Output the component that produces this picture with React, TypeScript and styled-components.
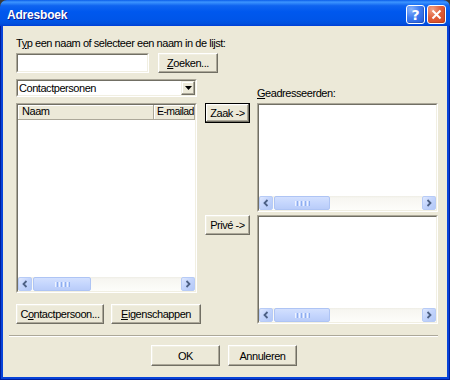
import React from 'react';
import styled, { createGlobalStyle } from 'styled-components';

const GlobalStyle = createGlobalStyle`
  html, body {
    margin: 0;
    padding: 0;
    background: #3a3a3a;
  }
  body {
    font-family: "Liberation Sans", Arial, sans-serif;
  }
`;

// Window chrome
const Window = styled.div`
  width: 450px;
  height: 380px;
  display: flex;
  flex-direction: column;
  border-radius: 7px 7px 0 0;
  overflow: hidden;
`;

const TitleBar = styled.div`
  height: 26px;
  box-sizing: border-box;
  padding: 3px 4px 0 7px;
  display: flex;
  align-items: center;
  justify-content: space-between;
  background: linear-gradient(
    to bottom,
    #0a5de9 0%,
    #3d95ff 8%,
    #0f64f0 22%,
    #0058ee 45%,
    #0055e8 78%,
    #0150dd 92%,
    #003dd7 100%
  );
`;

const Title = styled.span`
  color: #fff;
  font-weight: bold;
  font-size: 12px;
  letter-spacing: -0.2px;
  text-shadow: 1px 1px #0f1a8a;
  font-family: "Liberation Sans", Arial, sans-serif;
`;

const TitleButtons = styled.div`
  display: flex;
  gap: 2px;
`;

const CaptionButton = styled.div<{ $kind: 'help' | 'close' }>`
  width: 19px;
  height: 19px;
  box-sizing: border-box;
  border: 1px solid #fff;
  border-radius: 3px;
  display: flex;
  align-items: center;
  justify-content: center;
  color: #fff;
  font-weight: bold;
  font-size: 14px;
  font-family: "DejaVu Sans", sans-serif;
  background: ${p =>
    p.$kind === 'close'
      ? 'radial-gradient(circle at 25% 20%, #f1a184 0%, #e0603b 45%, #d6441d 100%)'
      : 'radial-gradient(circle at 25% 20%, #8ab4fb 0%, #3f7cf0 45%, #2359d8 100%)'};
  box-shadow: inset -1px -1px rgba(0, 0, 0, 0.15);
`;

const Frame = styled.div`
  flex: 1;
  display: flex;
  background: #0843d9;
  padding: 0 4px 3px 3px;
  box-shadow: inset 1px 0 #001e9c, inset -1px 0 #001e9c, inset 0 -1px #001e9c;
`;

const Client = styled.div`
  flex: 1;
  display: flex;
  flex-direction: column;
  background: #ece9d8;
  padding: 11px 9px 11px 13px;
  font-size: 11px;
  letter-spacing: -0.45px;
  color: #000;
`;

// Controls
const Label = styled.div`
  height: 13px;
  line-height: 13px;
  white-space: nowrap;
`;

const Mnemonic = styled.u`
  text-decoration: underline;
`;

const Button = styled.div<{ $w: number; $h?: number; $default?: boolean }>`
  width: ${p => p.$w}px;
  height: ${p => p.$h ?? 20}px;
  box-sizing: border-box;
  display: flex;
  align-items: center;
  justify-content: center;
  white-space: nowrap;
  background: #ece9d8;
  border: 1px solid;
  border-color: ${p => (p.$default ? '#000' : '#fff #716f64 #716f64 #fff')};
  box-shadow: ${p =>
    p.$default
      ? 'inset -1px -1px #716f64, inset 1px 1px #fff, inset -2px -2px #aca899, inset 2px 2px #f1efe2'
      : 'inset -1px -1px #aca899, inset 1px 1px #f1efe2'};
`;

const Sunken = styled.div<{ $w: number; $h: number }>`
  width: ${p => p.$w}px;
  height: ${p => p.$h}px;
  box-sizing: border-box;
  border: 1px solid;
  border-color: #aca899 #fff #fff #aca899;
  display: flex;
`;

const SunkenInner = styled.div`
  flex: 1;
  min-width: 0;
  display: flex;
  flex-direction: column;
  background: #fff;
  border: 1px solid;
  border-color: #716f64 #f1efe2 #f1efe2 #716f64;
  overflow: hidden;
`;

const SearchRow = styled.div`
  display: flex;
  gap: 9px;
  margin-top: 3px;
`;

const Main = styled.div`
  display: flex;
  gap: 4px;
  margin-top: 6px;
`;

const LeftCol = styled.div`
  width: 185px;
  display: flex;
  flex-direction: column;
`;

const ComboRow = styled.div`
  flex: 1;
  display: flex;
  align-items: center;
  padding-left: 1px;
`;

const ComboText = styled.span`
  flex: 1;
  line-height: 14px;
`;

const ComboArrow = styled.div`
  width: 14px;
  height: 14px;
  box-sizing: border-box;
  display: flex;
  align-items: center;
  justify-content: center;
  background: #ece9d8;
  border: 1px solid;
  border-color: #f1efe2 #716f64 #716f64 #f1efe2;
  box-shadow: inset -1px -1px #aca899, inset 1px 1px #fff;
`;

const ListSpacer = styled.div`
  margin-top: 6px;
`;

const HeaderRow = styled.div`
  height: 15px;
  display: flex;
  flex-shrink: 0;
  background: #ece9d8;
`;

const HeaderCell = styled.div<{ $w?: number }>`
  ${p => (p.$w ? `width: ${p.$w}px;` : 'flex: 1; font-size: 10.5px; letter-spacing: -0.6px;')}
  box-sizing: border-box;
  height: 15px;
  line-height: 13px;
  padding-left: ${p => (p.$w ? 4 : 3)}px;
  white-space: nowrap;
  overflow: hidden;
  border-bottom: 1px solid #aca899;
  border-right: 1px solid #aca899;
  box-shadow: inset 1px 1px #fff;
`;

const ListBody = styled.div`
  flex: 1;
  background: #fff;
`;

const LeftButtons = styled.div`
  display: flex;
  gap: 7px;
  margin-top: 11px;
`;

const RightCol = styled.div`
  display: flex;
  flex-direction: column;
  gap: 3px;
`;

const RecipientsLabel = styled.div`
  height: 21px;
  box-sizing: border-box;
  padding-left: 52px;
  display: flex;
  align-items: flex-end;
  line-height: 13px;
`;

const RecipientRow = styled.div`
  display: flex;
  gap: 7px;
  align-items: flex-start;
`;

// XP styled scrollbar
const ScrollBar = styled.div`
  height: 14px;
  flex-shrink: 0;
  display: flex;
  background: linear-gradient(to bottom, #eeede5 0, #f7f6f1 2px, #fdfdfa 100%);
`;

const ScrollButton = styled.div`
  width: 14px;
  box-sizing: border-box;
  border: 1px solid #b7cbf6;
  border-radius: 2px;
  display: flex;
  align-items: center;
  justify-content: center;
  background: linear-gradient(to bottom right, #dfe8fe 0%, #c4d5fc 45%, #b3c8f7 100%);
`;

const ScrollThumb = styled.div<{ $w: number }>`
  width: ${p => p.$w}px;
  margin-left: 1px;
  box-sizing: border-box;
  border: 1px solid #aec4f4;
  border-radius: 2px;
  display: flex;
  align-items: center;
  justify-content: center;
  gap: 1px;
  background: linear-gradient(to bottom, #d3e0fe 0%, #c5d6fd 50%, #b9ccf9 100%);
`;

const Grip = styled.span<{ $dark?: boolean }>`
  width: 1px;
  height: 5px;
  background: ${p => (p.$dark ? '#8eaef0' : '#eef3fe')};
`;

const ScrollFill = styled.div`
  flex: 1;
`;

const Separator = styled.div`
  margin: 11px 0 0 -7px;
  border-top: 1px solid #aca899;
  border-bottom: 1px solid #fff;
`;

const Footer = styled.div`
  display: flex;
  justify-content: center;
  gap: 8px;
  margin-top: 8px;
  padding-right: 6px;
`;

const Chevron: React.FC<{ dir: 'left' | 'right' }> = ({ dir }) => (
  <svg width="8" height="8" viewBox="0 0 8 8">
    <polyline
      points={dir === 'left' ? '5.5,1 2.5,4 5.5,7' : '2.5,1 5.5,4 2.5,7'}
      fill="none"
      stroke="#4d6185"
      strokeWidth="1.8"
    />
  </svg>
);

const HScroll: React.FC<{ thumb: number }> = ({ thumb }) => (
  <ScrollBar>
    <ScrollButton>
      <Chevron dir="left" />
    </ScrollButton>
    <ScrollThumb $w={thumb}>
      <Grip />
      <Grip $dark />
      <Grip />
      <Grip $dark />
      <Grip />
      <Grip $dark />
      <Grip />
      <Grip $dark />
    </ScrollThumb>
    <ScrollFill />
    <ScrollButton>
      <Chevron dir="right" />
    </ScrollButton>
  </ScrollBar>
);

const RecipientList: React.FC = () => (
  <Sunken $w={181} $h={109}>
    <SunkenInner>
      <ListBody />
      <HScroll thumb={56} />
    </SunkenInner>
  </Sunken>
);

const App: React.FC = () => (
  <>
    <GlobalStyle />
    <Window>
      <TitleBar>
        <Title>Adresboek</Title>
        <TitleButtons>
          <CaptionButton $kind="help">?</CaptionButton>
          <CaptionButton $kind="close">
            <svg width="11" height="11" viewBox="0 0 11 11">
              <path d="M1.5 1.5 L9.5 9.5 M9.5 1.5 L1.5 9.5" stroke="#fff" strokeWidth="2" />
            </svg>
          </CaptionButton>
        </TitleButtons>
      </TitleBar>
      <Frame>
        <Client>
          <Label>
            T<Mnemonic>y</Mnemonic>p een naam of selecteer een naam in de lijst:
          </Label>
          <SearchRow>
            <Sunken $w={133} $h={20}>
              <SunkenInner />
            </Sunken>
            <Button $w={60}>
              <Mnemonic>Z</Mnemonic>oeken...
            </Button>
          </SearchRow>
          <Main>
            <LeftCol>
              <Sunken $w={181} $h={18}>
                <SunkenInner>
                  <ComboRow>
                    <ComboText>Contactpersonen</ComboText>
                    <ComboArrow>
                      <svg width="7" height="4" viewBox="0 0 7 4">
                        <polygon points="0,0 7,0 3.5,4" fill="#000" />
                      </svg>
                    </ComboArrow>
                  </ComboRow>
                </SunkenInner>
              </Sunken>
              <ListSpacer>
                <Sunken $w={181} $h={190}>
                  <SunkenInner>
                    <HeaderRow>
                      <HeaderCell $w={136}>Naam</HeaderCell>
                      <HeaderCell>E-mailad</HeaderCell>
                    </HeaderRow>
                    <ListBody />
                    <HScroll thumb={58} />
                  </SunkenInner>
                </Sunken>
              </ListSpacer>
              <LeftButtons>
                <Button $w={88}>
                  C<Mnemonic>o</Mnemonic>ntactpersoon...
                </Button>
                <Button $w={90}>
                  <Mnemonic>E</Mnemonic>igenschappen
                </Button>
              </LeftButtons>
            </LeftCol>
            <RightCol>
              <RecipientsLabel>
                <span>
                  <Mnemonic>G</Mnemonic>eadresseerden:
                </span>
              </RecipientsLabel>
              <RecipientRow>
                <Button $w={45} $default>
                  Zaak -&gt;
                </Button>
                <RecipientList />
              </RecipientRow>
              <RecipientRow>
                <Button $w={45}>Privé -&gt;</Button>
                <RecipientList />
              </RecipientRow>
            </RightCol>
          </Main>
          <Separator />
          <Footer>
            <Button $w={69} $h={21}>
              OK
            </Button>
            <Button $w={69} $h={21}>
              Annuleren
            </Button>
          </Footer>
        </Client>
      </Frame>
    </Window>
  </>
);

export default App;
